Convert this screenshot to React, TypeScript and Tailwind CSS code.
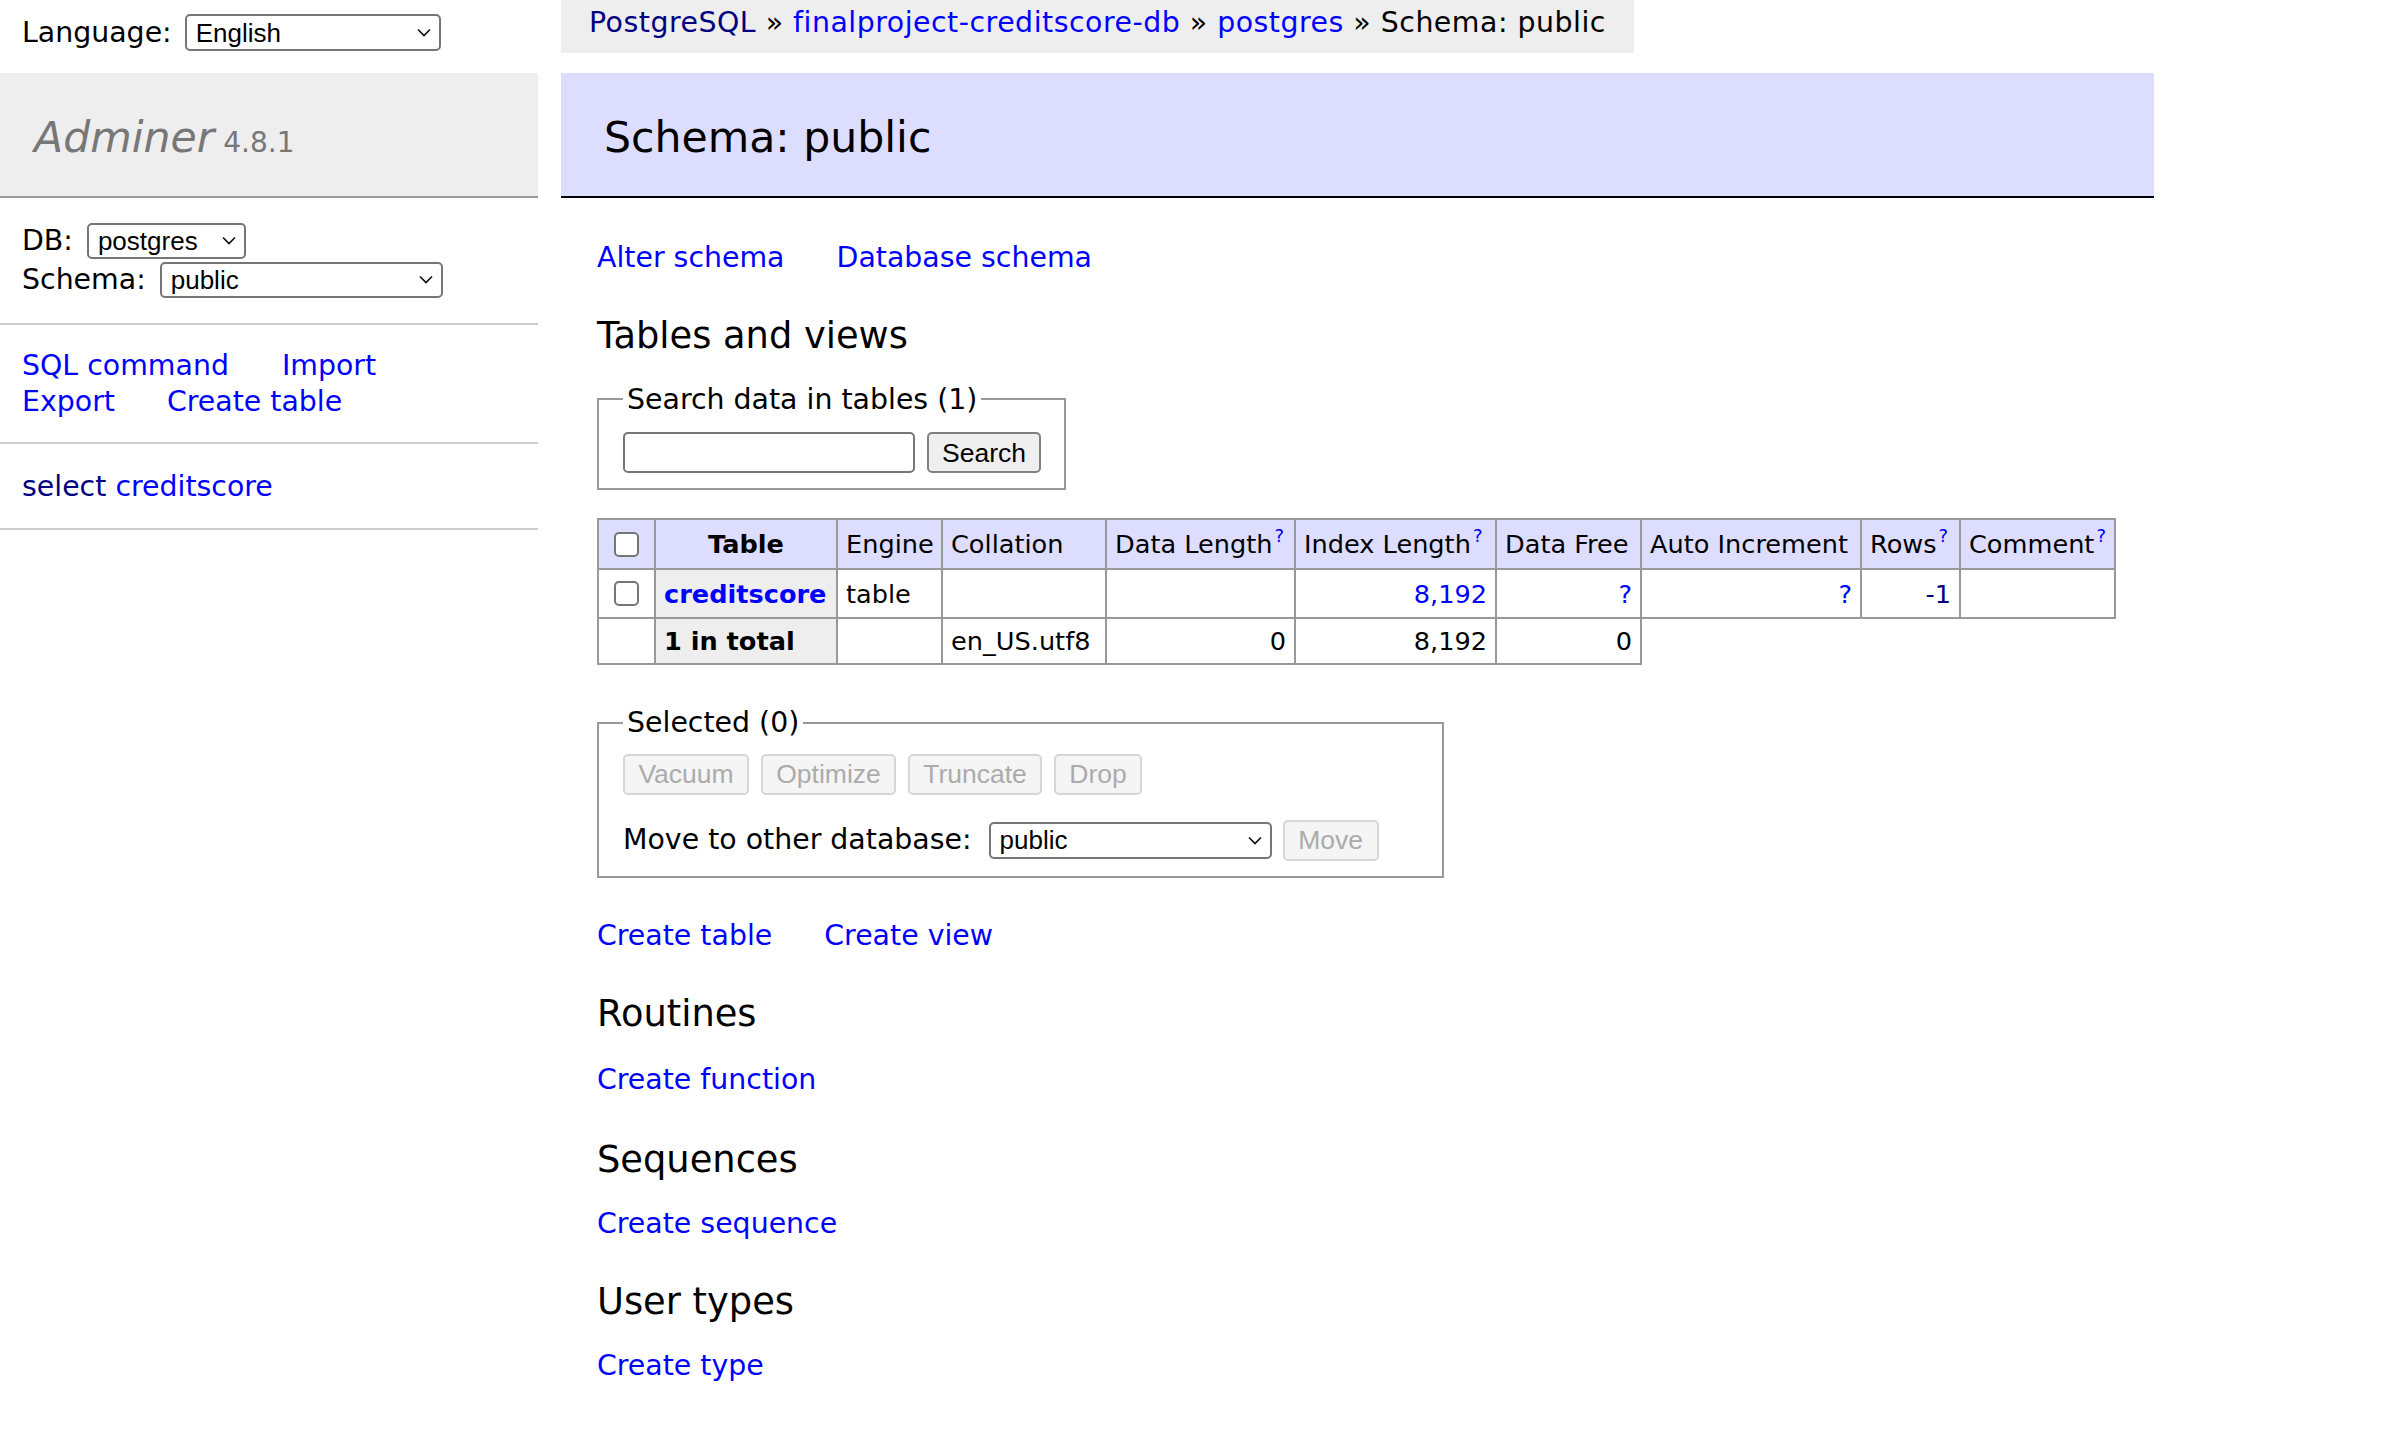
import React from "react";

const blue = "text-[#0000ff]";
const navy = "text-[#000080]";
const cell = "border-2 border-[#999] px-[8px] align-middle whitespace-nowrap";

function Chevron() {
  return (
    <svg width="14" height="9" viewBox="0 0 14 9" fill="none">
      <path d="M1 1.5 L7 7.5 L13 1.5" stroke="#111" strokeWidth="1.7" />
    </svg>
  );
}

function FakeSelect({ value, className }: { value: string; className: string }) {
  return (
    <div
      className={`flex items-center justify-between rounded-[5px] border-2 border-[#767676] bg-white pl-[9px] pr-[8px] font-['Liberation_Sans',Arial,sans-serif] text-[26px] leading-[30px] text-black ${className}`}
    >
      <span>{value}</span>
      <Chevron />
    </div>
  );
}

function Btn({ label, className, disabled }: { label: string; className: string; disabled?: boolean }) {
  return (
    <button
      disabled={disabled}
      className={`flex h-[41px] items-center justify-center rounded-[5px] border-2 font-['Liberation_Sans',Arial,sans-serif] text-[26.5px] leading-[30px] ${
        disabled ? "border-[#d6d6d6] bg-[#f5f5f5] text-[#ababab]" : "border-[#808080] bg-[#efefef] text-black"
      } ${className}`}
    >
      {label}
    </button>
  );
}

function Check() {
  return (
    <input
      type="checkbox"
      className="mx-auto block h-[25px] w-[25px] appearance-none rounded-[5px] border-2 border-[#767676] bg-white"
    />
  );
}

function Help() {
  return <sup className={`relative -top-[11px] ml-[2px] text-[18px] ${blue}`}>?</sup>;
}

export default function App() {
  return (
    <div className="flex min-h-screen bg-white font-['DejaVu_Sans',Verdana,sans-serif] text-[28.4px] leading-[35.5px] text-black">
      {/* sidebar */}
      <aside className="w-[538px] shrink-0">
        <div className="mt-[14px] flex h-[37px] items-center pl-[22px]">
          <span>Language:</span>
          <FakeSelect value="English" className="ml-[13px] h-[37px] w-[256px]" />
        </div>

        <div className="mt-[22px] h-[125px] border-b-2 border-[#999] bg-[#eee] pl-[34px] pt-[38px] leading-[53px] text-[#777]">
          <span className="text-[42.6px] italic">Adminer</span>{" "}
          <span className="text-[28px]">4.8.1</span>
        </div>

        <div className="border-b-2 border-[#ccc] px-[22px] pb-[24px] pt-[23px]">
          <div className="flex h-[39px] items-center">
            <span>DB:</span>
            <FakeSelect value="postgres" className="ml-[14px] h-[36px] w-[159px]" />
          </div>
          <div className="flex h-[39px] items-center">
            <span>Schema:</span>
            <FakeSelect value="public" className="ml-[14px] h-[36px] w-[283px]" />
          </div>
        </div>

        <div className={`border-b-2 border-[#ccc] px-[22px] pb-[23px] pt-[23px] ${blue}`}>
          <div className="flex gap-x-[53px]">
            <a>SQL command</a>
            <a>Import</a>
          </div>
          <div className="flex gap-x-[52px]">
            <a>Export</a>
            <a>Create table</a>
          </div>
        </div>

        <div className="border-b-2 border-[#ccc] px-[22px] pb-[23px] pt-[25px]">
          <a className={navy}>select</a> <a className={blue}>creditscore</a>
        </div>
      </aside>

      {/* content */}
      <main className="ml-[23px] w-[1593px] shrink-0">
        <div className="flex">
          <div className="h-[53px] whitespace-nowrap bg-[#eee] px-[28px] leading-[46px] tracking-[0.5px]">
            <a className={navy}>PostgreSQL</a> » <a className={blue}>finalproject-creditscore-db</a> »{" "}
            <a className={blue}>postgres</a> » Schema: public
          </div>
        </div>

        <h2 className="mt-[20px] h-[125px] border-b-2 border-black bg-[#ddf] pl-[43px] pt-[38px] text-[42.6px] font-normal leading-[53px]">
          Schema: public
        </h2>

        <div className="pl-[36px]">
          <div className={`mt-[42px] flex gap-x-[52px] ${blue}`}>
            <a>Alter schema</a>
            <a>Database schema</a>
          </div>

          <h3 className="mt-[37px] text-[36.8px] font-normal leading-[46px]">Tables and views</h3>

          <fieldset className="mt-[23px] w-[469px] border-2 border-[#999] pb-[15px] pl-[24px] pr-[23px] pt-[15px]">
            <legend className="px-[4px]">Search data in tables (1)</legend>
            <div className="flex">
              <input className="h-[41px] w-[292px] rounded-[5px] border-2 border-[#767676] bg-white" />
              <Btn label="Search" className="ml-[12px] w-[114px]" />
            </div>
          </fieldset>

          <table className="mt-[28px] w-[1517px] table-fixed border-collapse text-[25.6px] leading-[32px]">
            <thead>
              <tr className="h-[50px] bg-[#ddf]">
                <td className={`${cell} w-[57px]`}>
                  <Check />
                </td>
                <th className={`${cell} w-[182px] text-center font-bold`}>Table</th>
                <td className={`${cell} w-[105px]`}>Engine</td>
                <td className={`${cell} w-[164px]`}>Collation</td>
                <td className={`${cell} w-[189px]`}>
                  Data Length
                  <Help />
                </td>
                <td className={`${cell} w-[201px]`}>
                  Index Length
                  <Help />
                </td>
                <td className={`${cell} w-[145px]`}>Data Free</td>
                <td className={`${cell} w-[220px]`}>Auto Increment</td>
                <td className={`${cell} w-[99px] pr-[4px]`}>
                  Rows
                  <Help />
                </td>
                <td className={`${cell} w-[155px] pr-[4px]`}>
                  Comment
                  <Help />
                </td>
              </tr>
            </thead>
            <tbody>
              <tr className="h-[49px]">
                <td className={cell}>
                  <Check />
                </td>
                <th className={`${cell} bg-[#eee] text-left font-bold ${blue}`}>creditscore</th>
                <td className={cell}>table</td>
                <td className={cell}></td>
                <td className={cell}></td>
                <td className={`${cell} text-right ${blue}`}>8,192</td>
                <td className={`${cell} text-right ${blue}`}>?</td>
                <td className={`${cell} text-right ${blue}`}>?</td>
                <td className={`${cell} text-right ${navy}`}>-1</td>
                <td className={cell}></td>
              </tr>
              <tr className="h-[46px]">
                <td className={cell}></td>
                <th className={`${cell} bg-[#eee] text-left font-bold`}>1 in total</th>
                <td className={cell}></td>
                <td className={cell}>en_US.utf8</td>
                <td className={`${cell} text-right`}>0</td>
                <td className={`${cell} text-right`}>8,192</td>
                <td className={`${cell} text-right`}>0</td>
              </tr>
            </tbody>
          </table>

          <fieldset className="mt-[40px] w-[847px] border-2 border-[#999] pb-[15px] pl-[24px] pt-[13px]">
            <legend className="px-[4px]">Selected (0)</legend>
            <div className="flex gap-x-[12px]">
              <Btn label="Vacuum" className="w-[126px]" disabled />
              <Btn label="Optimize" className="w-[135px]" disabled />
              <Btn label="Truncate" className="w-[134px]" disabled />
              <Btn label="Drop" className="w-[88px]" disabled />
            </div>
            <div className="mt-[25px] flex h-[41px] items-center">
              <span>Move to other database:</span>
              <FakeSelect value="public" className="ml-[17px] h-[37px] w-[283px]" />
              <Btn label="Move" className="ml-[11px] w-[96px]" disabled />
            </div>
          </fieldset>

          <div className={`mt-[40px] flex gap-x-[52px] ${blue}`}>
            <a>Create table</a>
            <a>Create view</a>
          </div>

          <h3 className="mt-[38px] text-[36.8px] font-normal leading-[46px]">Routines</h3>
          <div className={`mt-[25px] ${blue}`}>
            <a>Create function</a>
          </div>

          <h3 className="mt-[39px] text-[36.8px] font-normal leading-[46px]">Sequences</h3>
          <div className={`mt-[23px] ${blue}`}>
            <a>Create sequence</a>
          </div>

          <h3 className="mt-[38px] text-[36.8px] font-normal leading-[46px]">User types</h3>
          <div className={`mt-[23px] ${blue}`}>
            <a>Create type</a>
          </div>
        </div>
      </main>
    </div>
  );
}
